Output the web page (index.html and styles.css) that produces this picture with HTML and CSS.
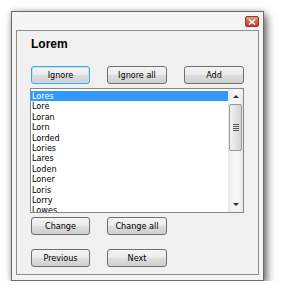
FILE: index.html
```html
<!DOCTYPE html>
<html lang="en">
<head>
  <meta charset="UTF-8" />
  <title>Spelling</title>
  <link rel="stylesheet" href="styles.css">
</head>
<body>

<div class="window">
  <div class="titlebar">
    <span class="close">
      <svg width="8" height="6" viewBox="0 0 8 6"><path d="M1 0.5 L7 5.5 M7 0.5 L1 5.5" stroke="#fff" stroke-width="1.6"/></svg>
    </span>
  </div>

  <div class="panel">
    <h1>Lorem</h1>

    <div class="row first">
      <button class="btn focus" type="button">Ignore</button>
      <button class="btn" type="button">Ignore all</button>
      <button class="btn" type="button">Add</button>
    </div>

    <div class="listbox">
      <ul class="items">
        <li class="selected">Lores</li>
        <li>Lore</li>
        <li>Loran</li>
        <li>Lorn</li>
        <li>Lorded</li>
        <li>Lories</li>
        <li>Lares</li>
        <li>Loden</li>
        <li>Loner</li>
        <li>Loris</li>
        <li>Lorry</li>
        <li>Lowes</li>
      </ul>
      <div class="scrollbar">
        <div class="arrow"><span class="up"></span></div>
        <div class="thumb"><span class="grip"></span></div>
        <div class="track"></div>
        <div class="arrow"><span class="down"></span></div>
      </div>
    </div>

    <div class="row second">
      <button class="btn" type="button">Change</button>
      <button class="btn" type="button">Change all</button>
    </div>

    <div class="row third">
      <button class="btn" type="button">Previous</button>
      <button class="btn" type="button">Next</button>
    </div>
  </div>
</div>

</body>
</html>
```

FILE: styles.css
```css
body {
  margin: 0;
  background: #fff;
  font-family: "DejaVu Sans Condensed", "DejaVu Sans", sans-serif;
  font-size: 9px;
  color: #000;
}
.window {
  box-sizing: border-box;
  margin: 11px 0 0 11px;
  width: 253px;
  height: 270px;
  border: 1px solid #6b6b6b;
  background: #f4f4f4;
  padding: 0 4px 5px;
  display: flex;
  flex-direction: column;
  box-shadow: 3px 4px 8px rgba(0,0,0,0.55), 0 0 6px rgba(0,0,0,0.2);
}
.titlebar {
  height: 18px;
  box-sizing: border-box;
  padding-top: 4px;
  display: flex;
  justify-content: flex-end;
  align-items: flex-start;
}
.close {
  width: 14px;
  height: 11px;
  box-sizing: border-box;
  border: 1px solid #8d3b2c;
  border-radius: 2px;
  background: linear-gradient(#e79a87, #d65d45 50%, #c4402a);
  display: flex;
  align-items: center;
  justify-content: center;
}
.close svg {
  display: block;
}
.panel {
  flex: 1;
  border: 1px solid #8e8f8f;
  background: #f0f0f0;
  padding: 0 14px;
}
h1 {
  margin: 6px 0 0;
  font-family: "Liberation Sans", Arial, sans-serif;
  font-size: 12px;
  line-height: 14px;
  font-weight: bold;
}
.row {
  display: flex;
  gap: 17px;
}
.row.first {
  margin-top: 15px;
}
.row.second {
  margin-top: 4px;
}
.row.third {
  margin-top: 14px;
}
.btn {
  width: 60px;
  height: 18px;
  padding: 0;
  border: 1px solid #707070;
  border-radius: 3px;
  background: linear-gradient(#f3f3f3, #ebebeb 48%, #dddddd 52%, #cfcfcf);
  font-family: inherit;
  font-size: 9px;
  color: #000;
}
.row .btn:first-child {
  width: 59px;
}
.btn.focus {
  border-color: #4ba3d8;
  box-shadow: inset 0 0 0 1px #b4e6fa;
}
.listbox {
  margin: 4px 0 0 -1px;
  width: 214px;
  height: 125px;
  box-sizing: border-box;
  border: 1px solid #828790;
  background: #fff;
  display: flex;
}
.items {
  flex: 1;
  list-style: none;
  margin: 0;
  padding: 2px 0 0;
  overflow: hidden;
}
.items li {
  height: 10.4px;
  line-height: 10.4px;
  padding-left: 1px;
  white-space: nowrap;
}
.items li.selected {
  background: #3399ff;
  color: #fff;
}
.scrollbar {
  width: 15px;
  background: linear-gradient(90deg, #e8e8e8, #f5f5f5 30%, #f5f5f5 70%, #e8e8e8);
  display: flex;
  flex-direction: column;
}
.arrow {
  height: 15px;
  display: flex;
  align-items: center;
  justify-content: center;
}
.up, .down {
  width: 0;
  height: 0;
  border-left: 3px solid transparent;
  border-right: 3px solid transparent;
}
.up {
  border-bottom: 3px solid #333;
}
.down {
  border-top: 3px solid #333;
}
.thumb {
  height: 47px;
  margin: 0 1px;
  box-sizing: border-box;
  border: 1px solid #979797;
  border-radius: 2px;
  background: linear-gradient(90deg, #f2f2f2, #e4e4e4 50%, #d4d4d4);
  display: flex;
  align-items: center;
  justify-content: center;
}
.grip {
  width: 6px;
  height: 7px;
  background: repeating-linear-gradient(#5a5a5a 0 1px, transparent 1px 2px);
}
.track {
  flex: 1;
}
```
